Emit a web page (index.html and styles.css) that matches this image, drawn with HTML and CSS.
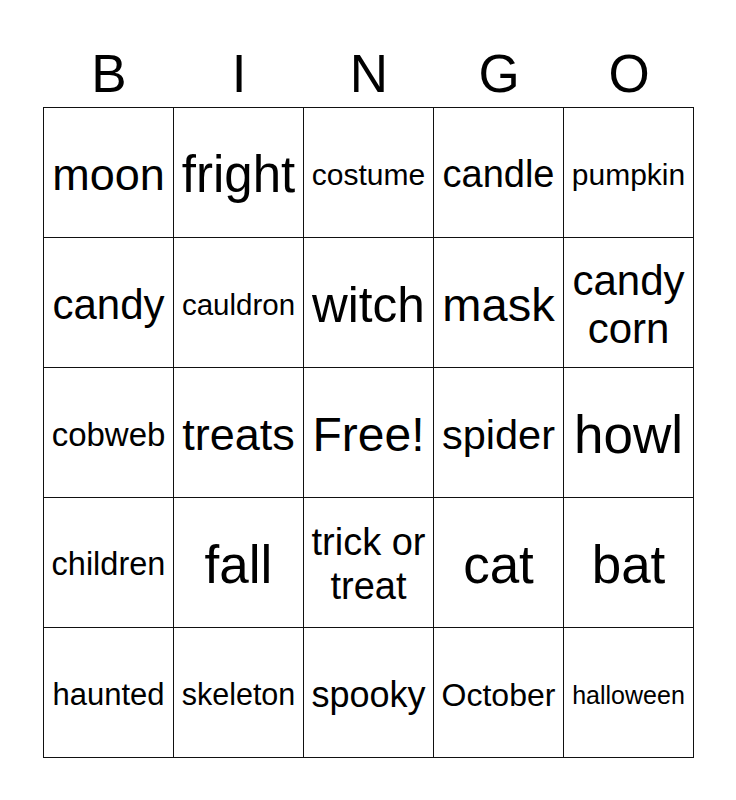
FILE: index.html
```html
<!DOCTYPE html>
<html>
<head>
<meta charset="utf-8">
<link rel="stylesheet" href="styles.css">
</head>
<body>
<div class="card">
  <div class="head">
    <div>B</div><div>I</div><div>N</div><div>G</div><div>O</div>
  </div>
  <div class="grid">
    <div class="cell s45">moon</div>
    <div class="cell s51">fright</div>
    <div class="cell s30">costume</div>
    <div class="cell s38">candle</div>
    <div class="cell s30">pumpkin</div>

    <div class="cell s42">candy</div>
    <div class="cell s29">cauldron</div>
    <div class="cell s50">witch</div>
    <div class="cell s47">mask</div>
    <div class="cell s42">candy corn</div>

    <div class="cell s33">cobweb</div>
    <div class="cell s45">treats</div>
    <div class="cell s48">Free!</div>
    <div class="cell s41">spider</div>
    <div class="cell s54">howl</div>

    <div class="cell s32b">children</div>
    <div class="cell s54">fall</div>
    <div class="cell s38">trick or treat</div>
    <div class="cell s54">cat</div>
    <div class="cell s54">bat</div>

    <div class="cell s31">haunted</div>
    <div class="cell s30b">skeleton</div>
    <div class="cell s36">spooky</div>
    <div class="cell s32">October</div>
    <div class="cell s25">halloween</div>
  </div>
</div>
</body>
</html>
```
FILE: styles.css
```css
html, body {
  margin: 0;
  padding: 0;
  background: #fff;
}
body {
  font-family: "Liberation Sans", Arial, sans-serif;
  color: #000;
}
.card {
  width: 651px;
  margin-left: 43px;
  padding-top: 46px;
}
.head {
  display: grid;
  grid-template-columns: repeat(5, 130px);
  padding-left: 1px;
  padding-bottom: 6px;
  font-size: 53px;
  line-height: 55px;
  text-align: center;
}
.grid {
  display: grid;
  grid-template-columns: repeat(5, 130px);
  grid-auto-rows: 130px;
  border-left: 1px solid #111;
  border-top: 1px solid #111;
}
.cell {
  box-sizing: border-box;
  border-right: 1px solid #111;
  border-bottom: 1px solid #111;
  display: flex;
  align-items: center;
  justify-content: center;
  text-align: center;
  line-height: 1.15;
  padding: 5px 4px 0;
}
.s25 { font-size: 25px; }
.s28 { font-size: 28px; }
.s29 { font-size: 29.5px; }
.s30 { font-size: 30px; }
.s30b { font-size: 30.5px; }
.s31 { font-size: 31px; }
.s32 { font-size: 32px; }
.s32b { font-size: 32.5px; }
.s33 { font-size: 33px; }
.s36 { font-size: 36px; }
.s38 { font-size: 38px; }
.s41 { font-size: 41.5px; }
.s42 { font-size: 42px; }
.s45 { font-size: 45px; }
.s47 { font-size: 47px; }
.s48 { font-size: 48px; }
.s50 { font-size: 49.5px; }
.s51 { font-size: 51px; }
.s54 { font-size: 53px; }
```
